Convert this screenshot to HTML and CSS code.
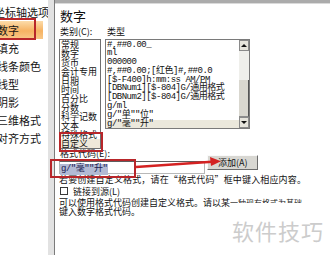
FILE: index.html
```html
<!DOCTYPE html>
<html lang="zh-CN">
<head>
<meta charset="utf-8">
<title>数字格式</title>
<link rel="stylesheet" href="styles.css">
</head>
<body>
<div class="dialog">
  <nav class="nav">
    <div class="nav-item first">坐标轴选项</div>
    <div class="nav-item active">数字</div>
    <div class="nav-item">填充</div>
    <div class="nav-item">线条颜色</div>
    <div class="nav-item">线型</div>
    <div class="nav-item">阴影</div>
    <div class="nav-item">三维格式</div>
    <div class="nav-item">对齐方式</div>
  </nav>
  <div class="sep"></div>
  <main class="pane">
    <div class="topband"></div>
    <h1 class="title">数字</h1>
    <div class="labels"><span class="lab-cat">类别(C):</span><span class="lab-type">类型</span></div>
    <div class="lists">
      <ul class="cat-list">
        <li>常规</li>
        <li>数字</li>
        <li>货币</li>
        <li>会计专用</li>
        <li>日期</li>
        <li>时间</li>
        <li>百分比</li>
        <li>分数</li>
        <li>科学记数</li>
        <li>文本</li>
        <li>特殊格式</li>
        <li class="cur">自定义</li>
      </ul>
      <div class="type-list">
        <ul class="types">
          <li>#,##0.00_</li>
          <li>ml</li>
          <li>000000</li>
          <li>#,##0.00;[红色]#,##0.0</li>
          <li>[$-F400]h:mm:ss AM/PM</li>
          <li>[DBNum1][$-804]G/通用格式</li>
          <li>[DBNum2][$-804]G/通用格式</li>
          <li>g/ml</li>
          <li>g/"单""位"</li>
          <li class="sel-row">g/"毫""升"</li>
        </ul>
        <div class="scroll">
          <div class="sb-btn"><span class="tri-up"></span></div>
          <div class="sb-track"></div>
          <div class="sb-thumb"></div>
          <div class="sb-btn"><span class="tri-down"></span></div>
        </div>
      </div>
    </div>
    <div class="code-row">
      <div class="code-left">
        <div class="code-label">格式代码(E):</div>
        <div class="code-input"><span class="sel">g/"毫""升"</span></div>
      </div>
      <button class="add">添加(A)</button>
    </div>
    <p class="desc d1">若要创建自定义格式，请在“格式代码”框中键入相应内容。</p>
    <div class="check"><span class="box"></span>链接到源(L)</div>
    <p class="desc d3">可以使用格式代码创建自定义格式。请以某<span class="cut">一种现有格式为基础</span></p>
    <p class="desc">键入数字格式代码。</p>
  </main>
</div>
<div class="mark mark-nav"></div>
<div class="mark mark-cat"></div>
<div class="mark mark-code"></div>
<svg class="arrow" width="330" height="255" viewBox="0 0 330 255">
  <line x1="136" y1="167" x2="212" y2="161.8" stroke="#d42222" stroke-width="2.5"/>
  <polygon points="221,161.2 210,157 211,166" fill="#d42222"/>
</svg>
<div class="watermark">软件技巧</div>
</body>
</html>
```

FILE: styles.css
```css
* { box-sizing: border-box; margin: 0; padding: 0; }
html, body { width: 330px; height: 255px; overflow: hidden; background: #fff; }
body {
  position: relative;
  font-family: "Noto Sans CJK SC", "Liberation Sans", sans-serif;
  font-size: 9px;
  color: #111;
}
.dialog { display: flex; height: 255px; }

.nav { width: 48px; flex: none; padding-top: 3px; overflow: hidden; }
.nav-item {
  width: 43px; height: 18px; line-height: 18px;
  font-size: 11px; white-space: nowrap; text-indent: -3px; color: #151515;
}
.nav-item.first { text-indent: -6px; }
.nav-item.active {
  background: linear-gradient(to bottom, #fcdcaa 0%, #f6b262 55%, #f9c888 100%);
}
.sep { width: 7px; flex: none; background: #e2e2e2; border-right: 1px solid #7b7b7b; }

.pane { flex: 1; min-width: 0; padding-left: 4px; }
.topband { height: 4px; margin-left: -4px; background: #ababab; border-bottom: 1px solid #dadada; }
.title { font-size: 13px; font-weight: normal; line-height: 14px; margin: 5px 0 0 1px; }
.labels { display: flex; height: 10px; line-height: 10px; margin: 4px 0 0 1px; }
.lab-cat { width: 47px; }

.lists { display: flex; align-items: flex-start; margin-top: 2px; }
.cat-list {
  list-style: none; width: 42px; height: 110px; margin-right: 4px;
  border: 1px solid #6f6f6f; padding-left: 1px; line-height: 9px;
  overflow: hidden; white-space: nowrap;
}
.cat-list .cur { background: #efe8d9; }

.type-list { display: flex; width: 145px; height: 90px; border: 1px solid #7a7a7a; }
.types {
  flex: 1; list-style: none; overflow: hidden; white-space: nowrap;
  font-family: "Liberation Mono", "Noto Sans CJK SC", monospace;
  letter-spacing: -0.5px; line-height: 8.8px; padding: 0.5px 0 0 1px;
}
.types .sel-row { background: #ebe8dc; margin-left: -1px; padding-left: 1px; }
.scroll { width: 10px; flex: none; display: flex; flex-direction: column; background: #f1f0ec; }
.sb-btn {
  height: 11px; flex: none; display: flex; align-items: center; justify-content: center;
  background: #e6e4dc; border: 1px solid #8a8a8a;
}
.tri-up { width: 0; height: 0; border-left: 3px solid transparent; border-right: 3px solid transparent; border-bottom: 3px solid #111; }
.tri-down { width: 0; height: 0; border-left: 3px solid transparent; border-right: 3px solid transparent; border-top: 3px solid #111; }
.sb-track { height: 29px; flex: none; background: #efefeb; }
.sb-thumb { flex: 1; background: #d9d7cf; border-right: 1px solid #555; border-bottom: 1px solid #8c8c8c; }

.code-row { display: flex; align-items: flex-start; }
.code-left { width: 146px; flex: none; }
.code-label { height: 9px; line-height: 9px; padding-left: 1px; }
.code-input {
  margin-top: 3px; height: 13px; line-height: 11px;
  border: 1px solid #b8b8b8; border-top-color: #5e5e5e;
}
.sel {
  display: inline-block; background: #b2bad4; color: #1c1c52;
  font-family: "Liberation Mono", "Noto Sans CJK SC", monospace; letter-spacing: -0.5px;
  padding: 0 1px; line-height: 11px;
}
.add {
  margin: 6px 0 0 2px; width: 51px; height: 15px; flex: none;
  background: #d8d7d2; border: 1px solid; border-color: #fafafa #6c6c6c #6c6c6c #fafafa;
  font-family: "Noto Sans CJK SC", sans-serif; font-size: 9px; color: #111;
  text-align: left; padding-left: 10px; line-height: 12px;
}

.desc { line-height: 9px; white-space: nowrap; }
.d1 { margin-top: 1px; letter-spacing: 0.15px; }
.check { display: flex; align-items: center; height: 10px; margin-top: 2px; }
.box { width: 8px; height: 8px; margin: 0 5px 0 1px; border: 1px solid #3a3a3a; background: #fff; }
.d3 { margin-top: 1.5px; }
.cut {
  display: inline-block; vertical-align: top; height: 5px; overflow: hidden;
  font-size: 8px; line-height: 9px; color: #222;
}

.mark { position: absolute; border: 2px solid #b8262a; }
.mark-nav { left: -2px; top: 18px; width: 38px; height: 22px; }
.mark-cat { left: 59px; top: 132px; width: 44px; height: 20px; }
.mark-code { left: 50px; top: 159px; width: 86px; height: 19px; }
.arrow { position: absolute; left: 0; top: 0; pointer-events: none; }
.watermark {
  position: absolute; left: 232px; top: 216px;
  font-size: 22px; line-height: 28px; letter-spacing: 1px; color: #cccccc;
}
```
